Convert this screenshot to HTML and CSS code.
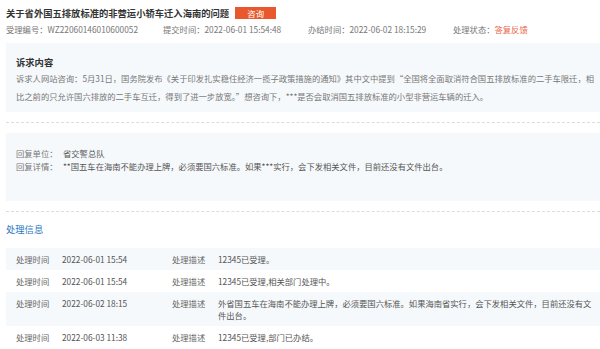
FILE: index.html
```html
<!DOCTYPE html>
<html lang="zh-CN">
<head>
  <meta charset="UTF-8">
  <meta name="viewport" content="width=device-width, initial-scale=1">
  <title>诉求详情</title>
  <link rel="stylesheet" href="styles.css">
</head>
<body>
  <div class="container">
    <div class="header">
      <span class="title">关于省外国五排放标准的非营运小轿车迁入海南的问题</span>
      <span class="badge">咨询</span>
    </div>
    <div class="meta">
      <span class="meta-item item-no">受理编号：WZ22060146010600052</span>
      <span class="meta-item item-submit">提交时间：2022-06-01 15:54:48</span>
      <span class="meta-item item-done">办结时间：2022-06-02 18:15:29</span>
      <span class="meta-item">处理状态：<em class="status">答复反馈</em></span>
    </div>

    <!-- 诉求内容 -->
    <div class="box content-box">
      <div class="box-title">诉求内容</div>
      <p class="content-text">诉求人网站咨询：5月31日，国务院发布《关于印发扎实稳住经济一揽子政策措施的通知》其中文中提到“全国将全面取消符合国五排放标准的二手车限迁，相比之前的只允许国六排放的二手车互迁，得到了进一步放宽。”想咨询下，***是否会取消国五排放标准的小型非营运车辆的迁入。</p>
    </div>
    <div class="divider"></div>

    <!-- 回复 -->
    <div class="box reply-box">
      <div class="reply-row"><span class="reply-label">回复单位：</span><span>省交警总队</span></div>
      <div class="reply-row"><span class="reply-label">回复详情：</span><span>**国五车在海南不能办理上牌，必须要国六标准。如果***实行，会下发相关文件，目前还没有文件出台。</span></div>
    </div>
    <div class="divider"></div>

    <div class="section-title">处理信息</div>
    <div class="process-list">
      <div class="process-row">
        <span class="p-label">处理时间</span><span>2022-06-01 15:54</span>
        <span class="p-label">处理描述</span><span>12345已受理。</span>
      </div>
      <div class="process-row">
        <span class="p-label">处理时间</span><span>2022-06-01 15:54</span>
        <span class="p-label">处理描述</span><span>12345已受理,相关部门处理中。</span>
      </div>
      <div class="process-row">
        <span class="p-label">处理时间</span><span>2022-06-02 18:15</span>
        <span class="p-label">处理描述</span><span>外省国五车在海南不能办理上牌，必须要国六标准。如果海南省实行，会下发相关文件，目前还没有文件出台。</span>
      </div>
      <div class="process-row">
        <span class="p-label">处理时间</span><span>2022-06-03 11:38</span>
        <span class="p-label">处理描述</span><span>12345已受理,部门已办结。</span>
      </div>
    </div>
  </div>
</body>
</html>
```

FILE: styles.css
```css
body {
  margin: 0;
  font-family: "Noto Sans CJK SC", "Noto Sans", sans-serif;
  font-size: 8.3px;
  color: #666;
  background: #fff;
}
.container {
  width: 594px;
  padding: 6px 0 0 6px;
}
.header {
  display: flex;
  align-items: center;
  height: 14px;
}
.title {
  font-size: 9.3px;
  font-weight: bold;
  color: #333;
  line-height: 14px;
}
.badge {
  display: inline-block;
  margin-left: 6px;
  width: 41px;
  height: 12px;
  line-height: 12px;
  text-align: center;
  background: #e8582c;
  color: #fff;
  font-size: 8.4px;
}
.meta {
  display: flex;
  margin-top: 3px;
  line-height: 12px;
  color: #777;
}
.item-no { width: 157px; }
.item-submit { width: 145px; }
.item-done { width: 145px; }
.status {
  font-style: normal;
  color: #e8653f;
}
.box {
  background: #f6f9fb;
}
.content-box {
  margin-top: 8px;
  padding: 12px 0 7px 10px;
}
.box-title {
  font-size: 9.3px;
  font-weight: bold;
  color: #333;
  line-height: 14px;
}
.content-text {
  margin: 0;
  line-height: 18px;
  color: #777;
}
.divider {
  margin: 10px 0;
  border-top: 1px dashed #ddd;
}
.reply-box {
  padding: 14px 8px 28px 10px;
  color: #555;
}
.reply-row {
  display: flex;
  line-height: 13px;
}
.reply-label {
  flex: none;
  width: 47px;
  color: #777;
}
.section-title {
  margin-top: 10px;
  font-size: 9.3px;
  line-height: 14px;
  color: #2b78c2;
}
.process-list {
  margin-top: 12px;
}
.process-row {
  display: grid;
  grid-template-columns: 46px 110px 46px 1fr;
  padding: 5px 4px 5px 10px;
  line-height: 12px;
  color: #555;
}
.process-row:nth-child(odd) {
  background: #f6f9fb;
}
.p-label {
  color: #666;
}
```
